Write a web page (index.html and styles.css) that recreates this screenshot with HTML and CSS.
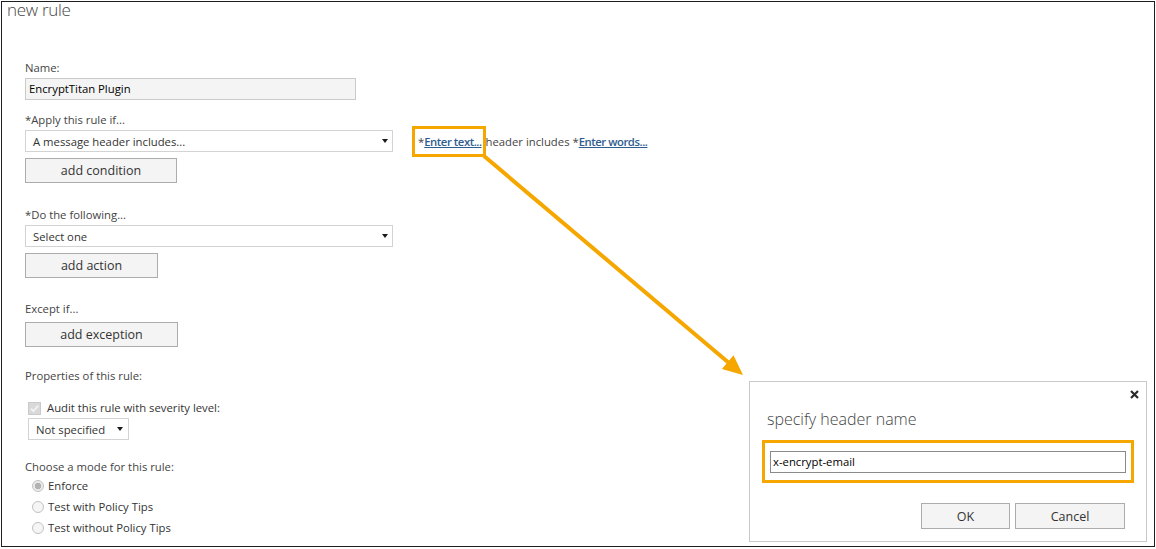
FILE: index.html
```html
<!DOCTYPE html>
<html lang="en">
<head>
    <meta charset="UTF-8">
    <title>new rule</title>
    <link rel="stylesheet" href="styles.css">
</head>
<body>

    <!-- Rule editor window -->
    <div class="rule-window">
        <h1 class="page-title">new rule</h1>

        <div class="rule-form">
            <div class="section">
                <div class="field-label">Name:</div>
                <div class="textbox name-box">EncryptTitan Plugin</div>
            </div>

            <div class="section section-apply">
                <div class="field-label">*Apply this rule if...</div>
                <div class="condition-row">
                    <div class="dropdown dropdown-wide">A message header includes...<span class="caret"></span></div>
                    <div class="condition-text"><span class="callout">*<a href="#" class="rule-link">Enter text...</a></span> header includes *<a href="#" class="rule-link">Enter words...</a></div>
                </div>
                <button class="btn btn-condition">add condition</button>
            </div>

            <div class="section section-do">
                <div class="field-label">*Do the following...</div>
                <div class="dropdown dropdown-wide">Select one<span class="caret"></span></div>
                <button class="btn btn-action">add action</button>
            </div>

            <div class="section section-except">
                <div class="field-label">Except if...</div>
                <button class="btn btn-exception">add exception</button>
            </div>

            <div class="section section-props">
                <div class="field-label">Properties of this rule:</div>
                <div class="check-row">
                    <svg class="check" width="13" height="13" viewBox="0 0 13 13">
                        <rect x="0.5" y="0.5" width="12" height="12" fill="#d9d9d9" stroke="#cacaca"/>
                        <path d="M3 6.6L5.4 9.2 10.2 3.6" fill="none" stroke="#f3f3f3" stroke-width="1.7"/>
                    </svg>
                    <span>Audit this rule with severity level:</span>
                </div>
                <div class="dropdown dropdown-small">Not specified<span class="caret"></span></div>
            </div>

            <div class="section section-mode">
                <div class="field-label">Choose a mode for this rule:</div>
                <div class="radio-list">
                    <div class="radio-row"><span class="radio radio-on"></span>Enforce</div>
                    <div class="radio-row"><span class="radio"></span>Test with Policy Tips</div>
                    <div class="radio-row"><span class="radio"></span>Test without Policy Tips</div>
                </div>
            </div>
        </div>
    </div>

    <!-- Popup: specify header name -->
    <div class="dialog">
        <div class="dialog-head">
            <svg class="close-icon" width="9" height="9" viewBox="0 0 9 9">
                <path d="M1 1L8 8M8 1L1 8" stroke="#2a2a2a" stroke-width="2.2"/>
            </svg>
        </div>
        <div class="dialog-title">specify header name</div>
        <div class="callout-box">
            <div class="textbox header-input">x-encrypt-email</div>
        </div>
        <div class="dialog-actions">
            <button class="btn btn-ok">OK</button>
            <button class="btn btn-cancel">Cancel</button>
        </div>
    </div>

    <!-- Annotation arrow -->
    <svg class="callout-arrow" width="1156" height="549" viewBox="0 0 1156 549">
        <line x1="484" y1="156" x2="729" y2="363" stroke="#f5a700" stroke-width="4"/>
        <polygon points="743,375 721.9,369 733.5,355.2" fill="#f5a700"/>
    </svg>

</body>
</html>
```

FILE: styles.css
```css
/* Basic Reset */
* {
    box-sizing: border-box;
}

body {
    margin: 0;
    background: #fff;
    font-family: "Open Sans", "Noto Sans", sans-serif;
    font-size: 11.3px;
    color: #333;
}

/* Window frame */
.rule-window {
    width: 1154px;
    height: 546px;
    margin: 1px 0 0 1px;
    border: 1px solid #1e1e1e;
    overflow: hidden;
}

.page-title {
    margin: -2px 0 0 5px;
    font-size: 17px;
    line-height: 20px;
    font-weight: 300;
    letter-spacing: -0.3px;
    color: #444;
}

.rule-form {
    padding: 40px 0 0 23px;
}

.field-label {
    line-height: 16px;
    color: #444;
}

/* Sections */
.section-apply {
    margin-top: 12px;
}

.section-do {
    margin-top: 24px;
}

.section-except {
    margin-top: 23px;
}

.section-props {
    margin-top: 21px;
}

.section-mode {
    margin-top: 19px;
}

/* Inputs */
.textbox {
    height: 22px;
    line-height: 20px;
    padding: 0 3px;
    color: #000;
}

.name-box {
    width: 331px;
    margin-top: 2px;
    background: #f4f4f4;
    border: 1px solid #cacaca;
}

.dropdown {
    display: flex;
    justify-content: space-between;
    align-items: center;
    height: 22px;
    margin-top: 2px;
    padding: 0 4px 0 7px;
    border: 1px solid #d3d3d3;
    background: #fff;
    color: #333;
}

.dropdown-wide {
    width: 368px;
}

.dropdown-small {
    width: 101px;
    margin: 2px 0 0 3px;
    padding-right: 5px;
}

.caret {
    width: 0;
    height: 0;
    border-left: 3.5px solid transparent;
    border-right: 3.5px solid transparent;
    border-top: 4px solid #1a1a1a;
}

/* Condition row */
.condition-row {
    display: flex;
    align-items: center;
}

.condition-row .dropdown {
    flex: none;
}

.condition-text {
    margin: 2px 0 0 22px;
    color: #444;
}

.callout {
    padding: 5px 1px 5px 3px;
    outline: 3px solid #f5a700;
}

.rule-link {
    color: #2f5d8e;
    font-weight: 600;
    letter-spacing: -0.45px;
    text-decoration: underline;
}

/* Buttons */
.btn {
    display: block;
    height: 25px;
    padding: 0;
    font-family: inherit;
    font-size: 12.5px;
    color: #333;
    background: #f4f4f4;
    border: 1px solid #acacac;
}

.btn-condition {
    width: 152px;
    margin-top: 6px;
}

.btn-action {
    width: 133px;
    margin-top: 6px;
}

.btn-exception {
    width: 153px;
    margin-top: 5px;
}

/* Properties */
.check-row {
    display: flex;
    align-items: center;
    gap: 6px;
    margin: 16px 0 0 3px;
    line-height: 16px;
}

.check {
    flex: none;
}

.radio-list {
    margin-top: 0;
    padding-left: 7px;
}

.radio-row {
    display: flex;
    align-items: center;
    gap: 4px;
    height: 21px;
}

.radio {
    width: 12px;
    height: 12px;
    border-radius: 50%;
    border: 1px solid #c2c2c2;
    background: #f5f5f5;
}

.radio-on {
    background: radial-gradient(circle, #b3b3b3 0 3px, #ececec 3.6px);
}

/* Popup dialog */
.dialog {
    position: absolute;
    left: 749px;
    top: 381px;
    width: 398px;
    height: 161px;
    padding: 0 12px;
    background: #fff;
    border: 1px solid #c9c9c9;
}

.dialog-head {
    display: flex;
    justify-content: flex-end;
    height: 17px;
    padding-top: 8px;
    margin-right: -5px;
}

.dialog-title {
    margin: 10px 0 0 5px;
    font-size: 16px;
    line-height: 20px;
    font-weight: 300;
    color: #444;
}

.callout-box {
    margin-top: 11px;
    padding: 8px 5px 7px 5px;
    border: 3px solid #f5a700;
}

.header-input {
    border: 1px solid #8a8a8a;
    padding: 0 2px;
}

.dialog-actions {
    display: flex;
    justify-content: flex-end;
    gap: 5px;
    margin-top: 20px;
    padding-right: 9px;
}

.dialog-actions .btn {
    height: 26px;
}

.btn-ok {
    width: 89px;
}

.btn-cancel {
    width: 110px;
}

/* Annotation overlay */
.callout-arrow {
    position: absolute;
    top: 0;
    left: 0;
    pointer-events: none;
}
```
